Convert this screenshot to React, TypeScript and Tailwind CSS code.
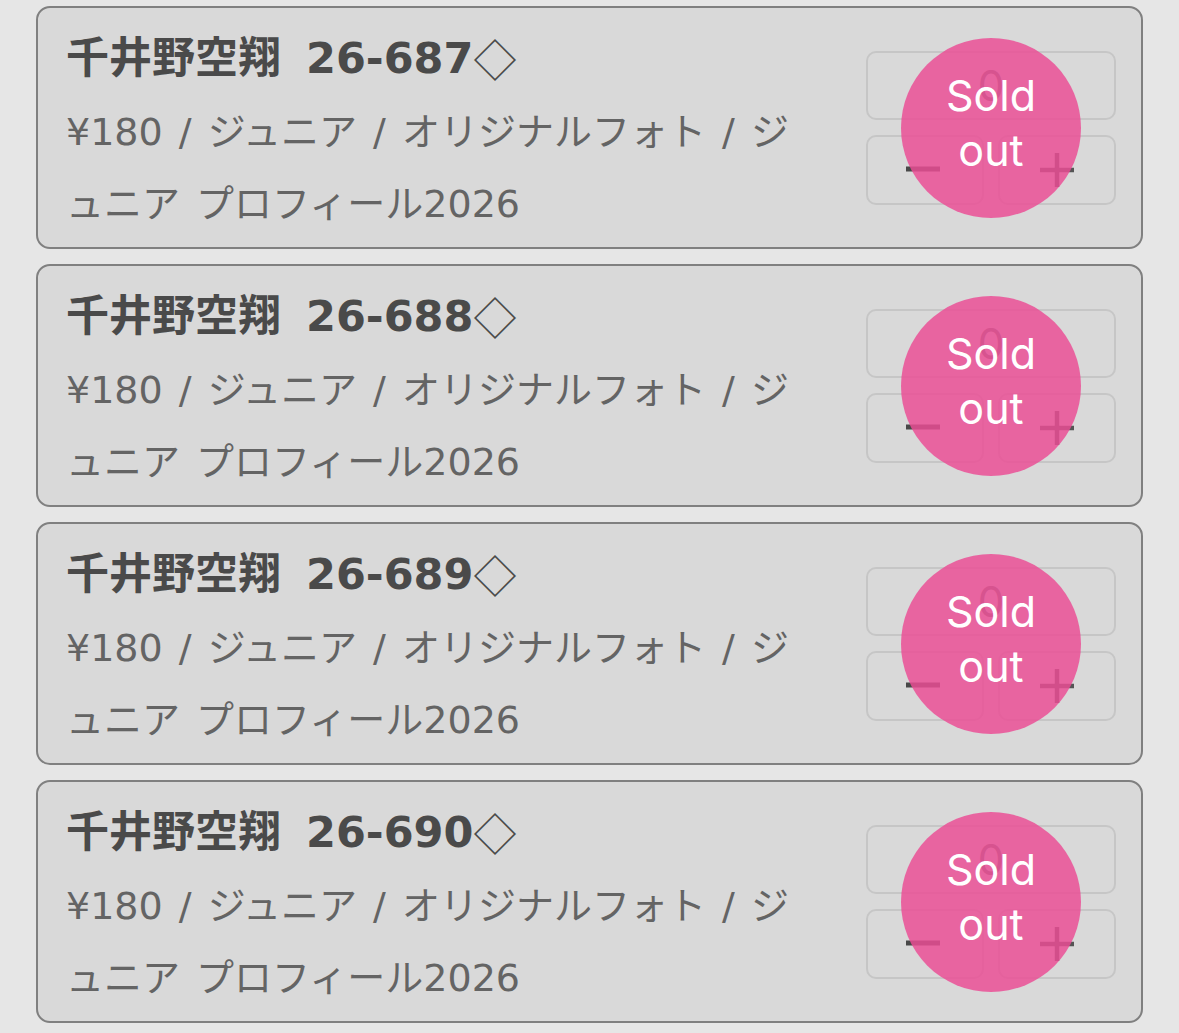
import React from 'react';

interface Item {
  name: string;
  code: string;
  price: number;
  tags: string[];
}

const items: Item[] = [
  { name: '千井野空翔', code: '26-687', price: 180, tags: ['ジュニア', 'オリジナルフォト', 'ジュニア プロフィール2026'] },
  { name: '千井野空翔', code: '26-688', price: 180, tags: ['ジュニア', 'オリジナルフォト', 'ジュニア プロフィール2026'] },
  { name: '千井野空翔', code: '26-689', price: 180, tags: ['ジュニア', 'オリジナルフォト', 'ジュニア プロフィール2026'] },
  { name: '千井野空翔', code: '26-690', price: 180, tags: ['ジュニア', 'オリジナルフォト', 'ジュニア プロフィール2026'] },
];

const textFont = { fontFamily: '"DejaVu Sans", "Noto Sans CJK JP", sans-serif' };
const cjkFont = { fontFamily: '"Noto Sans CJK JP", sans-serif' };
const uiFont = { fontFamily: 'Inter, "Noto Sans CJK JP", sans-serif' };

const QuantityControl: React.FC = () => {
  return (
    <div className="relative flex w-[250px] shrink-0 flex-col gap-[15px]" style={uiFont}>
      <div className="flex h-[69px] items-center justify-center rounded-[10px] border-2 border-[#c6c6c6] text-[42px] text-[#6e6e6e]">
        0
      </div>
      <div className="flex gap-[14px]">
        <button className="flex h-[70px] flex-1 items-center justify-center rounded-[10px] border-2 border-[#c6c6c6]">
          <svg width="36" height="36" viewBox="0 0 36 36" className="-mt-[2px] -ml-[4px]">
            <line x1="1" y1="18" x2="35" y2="18" stroke="#484848" strokeWidth="5" />
          </svg>
        </button>
        <button className="flex h-[70px] flex-1 items-center justify-center rounded-[10px] border-2 border-[#c6c6c6]">
          <svg width="36" height="36" viewBox="0 0 36 36">
            <line x1="1" y1="18" x2="35" y2="18" stroke="#555" strokeWidth="4.5" />
            <line x1="18" y1="1" x2="18" y2="35" stroke="#555" strokeWidth="4.5" />
          </svg>
        </button>
      </div>
      <div className="absolute left-1/2 top-1/2 flex h-[180px] w-[180px] -translate-x-1/2 -translate-y-1/2 items-center justify-center rounded-full bg-[rgba(235,78,149,0.84)]">
        <span className="-mt-[9px] w-[120px] text-center text-[43px] font-normal leading-[55px] text-white">Sold out</span>
      </div>
    </div>
  );
};

const ItemCard: React.FC<{ item: Item }> = ({ item }) => {
  return (
    <div className="flex items-center rounded-[14px] border-2 border-[#808080] bg-[#d9d9d9] pl-[28px] pr-[25px]">
      <div className="w-[740px] pt-[22px] pb-[7px]" style={textFont}>
        <h3 className="flex h-[56px] items-center whitespace-nowrap text-[43px] font-bold leading-[56px] text-[#4a4a4a] [word-spacing:10px]">
          {item.name} {item.code}
          <span className="font-normal leading-none" style={cjkFont}>◇</span>
        </h3>
        <p className="mt-[10px] text-[38px] leading-[72px] text-[#646464] [line-break:loose] [word-spacing:4px]">
          ¥{item.price} / {item.tags.join(' / ')}
        </p>
      </div>
      <div className="ml-auto">
        <QuantityControl />
      </div>
    </div>
  );
};

export default function App() {
  return (
    <div className="min-h-screen bg-[#e6e6e6] px-[36px] pt-[6px]">
      <div className="flex flex-col gap-[15px]">
        {items.map((item) => (
          <ItemCard key={item.code} item={item} />
        ))}
      </div>
    </div>
  );
}
